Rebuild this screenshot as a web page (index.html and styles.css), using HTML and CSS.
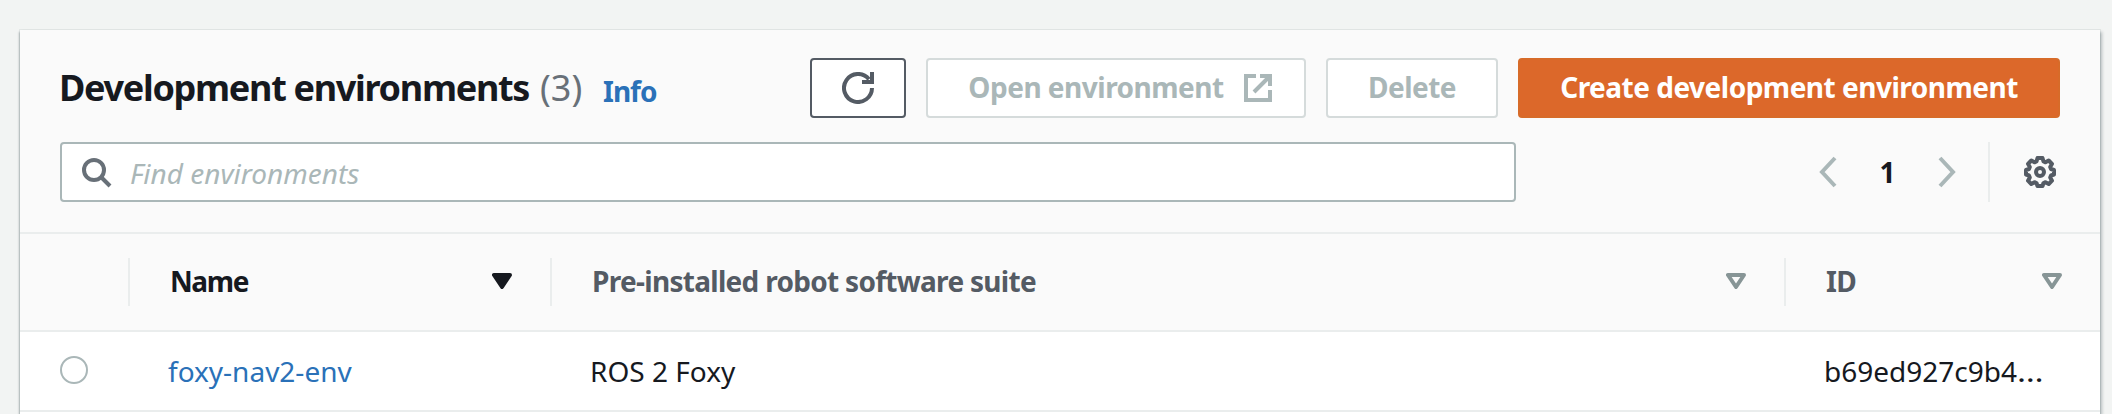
FILE: index.html
```
<!DOCTYPE html>
<html lang="en">
<head>
<meta charset="utf-8">
<title>Development environments</title>
<link rel="stylesheet" href="styles.css">
</head>
<body>
<main class="panel">
  <header class="panel-header">
    <div class="title-row">
      <h1 class="title">Development environments</h1>
      <span class="counter">(3)</span>
      <a class="info">Info</a>
      <div class="actions">
        <button class="btn btn-refresh" aria-label="Refresh">
          <svg class="icon" viewBox="0 0 32 32" fill="none" stroke="currentColor" stroke-width="4"><path d="M30 16A14 14 0 1 1 27 7.300"/><path d="M30 0v10H20"/></svg>
        </button>
        <button class="btn btn-disabled btn-open">
          <span>Open environment</span>
          <svg class="icon" viewBox="0 0 32 32" fill="none" stroke="currentColor" stroke-width="4"><path d="M14 4H4v24h24V18"/><path d="M18 4h10v10M28 4 12 20"/></svg>
        </button>
        <button class="btn btn-disabled btn-delete"><span>Delete</span></button>
        <button class="btn btn-primary"><span>Create development environment</span></button>
      </div>
    </div>
    <div class="filter-row">
      <label class="search">
        <svg class="icon" viewBox="0 0 32 32" fill="none" stroke="currentColor" stroke-width="4"><circle cx="12" cy="14" r="10"/><path d="m19 21 9 9"/></svg>
        <input class="search-input" placeholder="Find environments">
      </label>
      <nav class="pagination">
        <svg class="chevron" viewBox="0 0 18 32" fill="none" stroke="currentColor" stroke-width="4"><path d="M16 2 3 16l13 14"/></svg>
        <span class="page">1</span>
        <svg class="chevron" viewBox="0 0 18 32" fill="none" stroke="currentColor" stroke-width="4"><path d="m2 2 13 14L2 30"/></svg>
      </nav>
      <div class="settings">
        <svg class="icon" viewBox="0 0 32 32" fill="none" stroke="currentColor" stroke-width="4" stroke-linejoin="round"><path d="M13.500 2h5l1 3.500 2 .8 3.200-1.800 3.300 3.300-1.800 3.200.8 2 3 1v4.500l-3 1-.8 2 1.800 3.200-3.300 3.300-3.200-1.800-2 .8-1 3h-5l-1-3-2-.8-3.200 1.800L4 24.700l1.800-3.200-.8-2-3-1V14l3-1 .8-2L4 7.800l3.300-3.300 3.200 1.800 2-.8z"/><circle cx="16" cy="16" r="4"/></svg>
      </div>
    </div>
  </header>
  <section class="table">
    <div class="row head">
      <div class="cell select"></div>
      <div class="cell name sorted"><span>Name</span><svg class="sort" viewBox="0 0 20 16"><path d="M2 2h16l-8 12z" fill="currentColor" stroke="currentColor" stroke-width="4" stroke-linejoin="round"/></svg></div>
      <div class="cell suite"><span>Pre-installed robot software suite</span><svg class="sort" viewBox="0 0 20 16"><path d="M2 2h16l-8 12z" fill="none" stroke="currentColor" stroke-width="4" stroke-linejoin="round"/></svg></div>
      <div class="cell id"><span>ID</span><svg class="sort" viewBox="0 0 20 16"><path d="M2 2h16l-8 12z" fill="none" stroke="currentColor" stroke-width="4" stroke-linejoin="round"/></svg></div>
    </div>
    <div class="row body">
      <div class="cell select"><span class="radio"></span></div>
      <div class="cell name"><a class="link">foxy-nav2-env</a></div>
      <div class="cell suite">ROS 2 Foxy</div>
      <div class="cell id"><span>b69ed927c9b4<span class="ellipsis">…</span></span></div>
    </div>
  </section>
</main>
</body>
</html>
```
FILE: styles.css
```
* { box-sizing: border-box; }
body {
  margin: 0;
  padding: 30px 12px 0 20px;
  height: 414px;
  overflow: hidden;
  background: #f2f4f3;
  font: 28px/40px "Noto Sans", "Open Sans", sans-serif;
  color: #16191f;
}
.panel {
  width: 2080px;
  height: 384px;
  background: #fff;
  box-shadow: 0 0 0 1px rgba(0, 28, 36, .06), 2px 2px 3px rgba(0, 28, 36, .25), -1px 2px 2px rgba(0, 28, 36, .25);
}
.panel-header {
  height: 204px;
  padding: 28px 40px 0;
  background: #fafafa;
  border-bottom: 2px solid #eaeded;
}
.title-row { display: flex; align-items: center; height: 60px; }
.title {
  margin: 0 0 0 -1px;
  width: 481px;
  font-size: 36px;
  line-height: 60px;
  letter-spacing: -1.3px;
  white-space: nowrap;
}
.counter { width: 63px; font-size: 36px; line-height: 60px; color: #687078; }
.info { padding-top: 6px; font-weight: 700; letter-spacing: -1px; color: #2a71b8; }
.actions { display: flex; gap: 20px; margin-left: auto; }
.btn {
  display: flex;
  align-items: center;
  justify-content: center;
  height: 60px;
  padding: 0;
  border: 2px solid #545b64;
  border-radius: 4px;
  background: #fff;
  color: #545b64;
  font: inherit;
  font-weight: 700;
  letter-spacing: -.5px;
  white-space: nowrap;
}
.btn span { padding-bottom: 2px; }
.icon { display: block; width: 32px; height: 32px; flex: none; }
.btn-refresh { width: 96px; }
.btn-open { width: 380px; gap: 18px; padding-left: 10px; }
.btn-delete { width: 172px; }
.btn-primary { width: 542px; background: #dc682a; border-color: #d76b29; color: #fff; }
.btn-disabled { border-color: #d5dbdb; color: #aab7b8; }
.filter-row { display: flex; align-items: center; height: 60px; margin-top: 24px; }
.search {
  display: flex;
  align-items: center;
  width: 1456px;
  height: 60px;
  padding-left: 20px;
  border: 2px solid #aab7b8;
  border-radius: 4px;
  background: #fff;
  color: #687078;
}
.search-input {
  flex: 1;
  margin-left: 16px;
  padding: 2px 0 0;
  border: 0;
  outline: 0;
  background: none;
  font: inherit;
}
.search-input::placeholder { color: #aab7b8; font-style: italic; opacity: 1; }
.pagination { display: flex; align-items: center; width: 472px; padding-left: 303px; color: #aab7b8; }
.chevron { display: block; width: 18px; height: 32px; flex: none; }
.page { width: 101px; text-align: center; font-weight: 700; color: #16191f; }
.settings { display: flex; align-items: center; height: 60px; padding-left: 34px; border-left: 2px solid #eaeded; color: #545b64; }
.row { display: grid; grid-template-columns: 108px 422px 1234px 316px; }
.cell { display: flex; align-items: center; white-space: nowrap; }
.head { height: 98px; padding: 24px 0; background: #fafafa; border-bottom: 2px solid #eaeded; }
.head .cell { justify-content: space-between; padding: 0 38px 2px 40px; border-left: 2px solid #eaeded; font-weight: 700; letter-spacing: -.7px; color: #545b64; }
.head .select { border-left: 0; }
.head .sorted { color: #16191f; }
.head .name span { letter-spacing: -1.400px; }
.sort { display: block; width: 20px; height: 16px; color: #879596; }
.sorted .sort { color: #16191f; }
.body { height: 80px; border-bottom: 2px solid #eaeded; }
.body .cell { padding-left: 40px; }
.body .select { padding-bottom: 2px; }
.ellipsis { display: inline-block; transform: scaleX(1.2); transform-origin: left; }
.radio { width: 28px; height: 28px; border: 2px solid #aab7b8; border-radius: 50%; background: #fff; }
.link { color: #2a71b8; }
```
